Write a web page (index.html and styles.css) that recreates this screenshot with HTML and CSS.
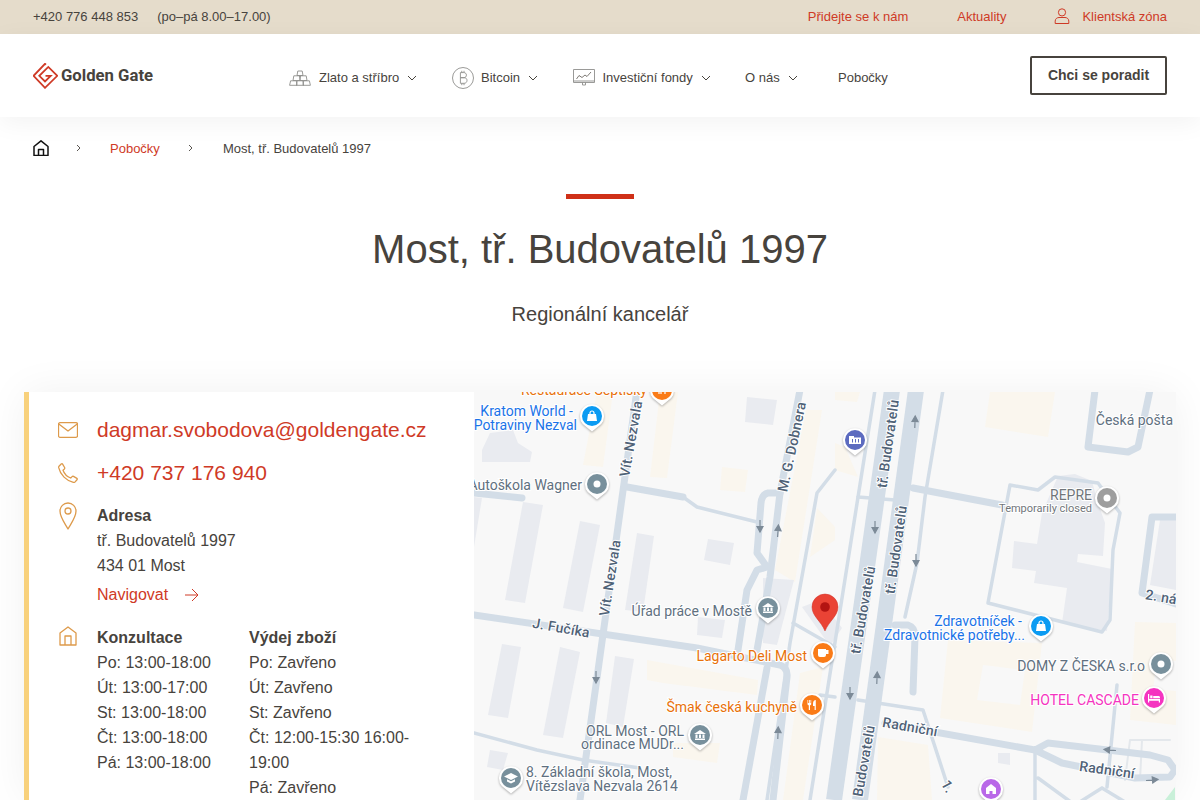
FILE: index.html
```html
<!DOCTYPE html>
<html lang="cs">

<head>
    <meta charset="UTF-8">
    <meta name="viewport" content="width=device-width, initial-scale=1.0">
    <title>Most, tř. Budovatelů 1997 - Golden Gate</title>
    <link rel="stylesheet" href="styles.css">
</head>

<body>
    <div class="topbar">
        <div class="topbar-left">
            <span>+420 776 448 853</span>
            <span>(po–pá 8.00–17.00)</span>
        </div>
        <div class="topbar-right">
            <a href="#">Přidejte se k nám</a>
            <a href="#">Aktuality</a>
            <a href="#" class="client-link">
                <svg class="user-icon" viewBox="0 0 16 16">
                    <circle cx="8" cy="4.4" r="3.6" />
                    <path d="M1.2 15.5h13.6v-2.4c0-2.2-1.8-3.6-3.8-3.6H5c-2 0-3.8 1.4-3.8 3.6z" />
                </svg>
                Klientská zóna
            </a>
        </div>
    </div>

    <header class="header">
        <a href="#" class="logo">
            <svg class="logo-mark" viewBox="0 0 25 26">
                <path d="M13 1.600 12 .8 .6 12.800 12 24.800 24.300 12.800 15.300 3.900 6.300 12.800 12 18.500 17.700 12.800H12.500" />
            </svg>
            <span>Golden Gate</span>
        </a>
        <nav class="nav">
            <a href="#" class="nav-item nav-gold">
                <svg class="nav-icon" viewBox="0 0 22 16">
                    <path d="M8.8 1h4.4l.8 4.5H8zM4.8 5.8h5.6l.7 4.7H4zM11.6 5.8h5.6l.8 4.7h-7.1zM1.6 10.8h5.7l.7 4.5H.6zM8.2 10.8h5.6l.7 4.5H7.5zM14.7 10.8h5.7l1 4.5h-7.4z" />
                </svg>
                Zlato a stříbro
                <svg class="chevron" viewBox="0 0 10 6"><path d="M1 1l4 4 4-4" /></svg>
            </a>
            <a href="#" class="nav-item nav-bitcoin">
                <svg class="nav-icon" viewBox="0 0 22 22">
                    <circle cx="11" cy="11" r="10.5" />
                    <path d="M8.4 5.6h3.4c1.6 0 2.6 1 2.6 2.5s-1 2.6-2.6 2.6H8.4zM8.4 10.7h3.8c1.7 0 2.8 1.1 2.8 2.7s-1.1 2.9-2.8 2.9H8.4zM9.8 5.6V3.8M12 5.6V3.8M9.8 16.3v1.9M12 16.3v1.9" />
                </svg>
                Bitcoin
                <svg class="chevron" viewBox="0 0 10 6"><path d="M1 1l4 4 4-4" /></svg>
            </a>
            <a href="#" class="nav-item nav-funds">
                <svg class="nav-icon" viewBox="0 0 22 17">
                    <path d="M.5.5h21v13H.5zM.5 12h21M9.5 13.5v2.500h3v-2.500" />
                    <path class="chart-line" d="M3.500 10l2.500-3.500 3 2 3-2.500 2 1.500 4-4.500" />
                </svg>
                Investiční fondy
                <svg class="chevron" viewBox="0 0 10 6"><path d="M1 1l4 4 4-4" /></svg>
            </a>
            <a href="#" class="nav-item nav-about">
                O nás
                <svg class="chevron" viewBox="0 0 10 6"><path d="M1 1l4 4 4-4" /></svg>
            </a>
            <a href="#" class="nav-item">Pobočky</a>
        </nav>
        <a href="#" class="cta">Chci se poradit</a>
    </header>

    <div class="breadcrumb">
        <a href="#" class="crumb-home">
            <svg viewBox="0 0 16 16">
                <path d="M1 15.500V6.500L8 .8l7 5.700v9zM5.500 15.500V9.500h5v6" />
            </svg>
        </a>
        <svg class="crumb-sep" viewBox="0 0 5 8"><path d="M1 1l3 3-3 3" /></svg>
        <a href="#" class="crumb-link">Pobočky</a>
        <svg class="crumb-sep" viewBox="0 0 5 8"><path d="M1 1l3 3-3 3" /></svg>
        <span>Most, tř. Budovatelů 1997</span>
    </div>

    <div class="title-block">
        <div class="title-bar"></div>
        <h1>Most, tř. Budovatelů 1997</h1>
        <p>Regionální kancelář</p>
    </div>

    <div class="card">
        <div class="info">
            <div class="info-row big-row">
                <svg class="info-icon" viewBox="0 0 20 16">
                    <rect x=".5" y=".7" width="19" height="14.600" rx="1.500" />
                    <path d="M.8 2l9.200 7 9.200-7" />
                </svg>
                <a href="#">dagmar.svobodova@goldengate.cz</a>
            </div>
            <div class="info-row big-row">
                <svg class="info-icon" viewBox="0 0 20 20">
                    <path d="M1 3.200 3.200 1c.5-.4 1.100-.4 1.400.1l2 3.400c.3.500.2 1-.2 1.400L5 7.200c1.200 3.300 4.300 6.500 7.700 7.800l1.400-1.400c.4-.4.900-.5 1.400-.2l3.400 2c.5.300.5.900.1 1.400l-1.900 2.100c-.4.400-1 .6-1.600.5C8.500 18 2.200 11.700.7 4.700c-.1-.6 0-1.100.3-1.500z" />
                </svg>
                <a href="#">+420 737 176 940</a>
            </div>
            <div class="info-row address-row">
                <svg class="info-icon pin-icon" viewBox="0 0 18 28">
                    <path d="M9 27C5 20 1 15 1 9a8 8 0 0 1 16 0c0 6-4 11-8 18z" />
                    <circle cx="9" cy="9" r="3" />
                </svg>
                <div>
                    <strong>Adresa</strong>
                    <div>tř. Budovatelů 1997</div>
                    <div>434 01 Most</div>
                    <a href="#" class="navigate">
                        Navigovat
                        <svg viewBox="0 0 14 14"><path d="M0 7h13M7 1l6 6-6 6" /></svg>
                    </a>
                </div>
            </div>
            <div class="info-row hours-row">
                <svg class="info-icon home-icon" viewBox="0 0 18 20">
                    <path d="M1 19V7l8-6 8 6v12zM6 19v-9h6v9" />
                </svg>
                <div class="hours">
                    <div>
                        <strong>Konzultace</strong>
                        <div>Po: 13:00-18:00</div>
                        <div>Út: 13:00-17:00</div>
                        <div>St: 13:00-18:00</div>
                        <div>Čt: 13:00-18:00</div>
                        <div>Pá: 13:00-18:00</div>
                    </div>
                    <div>
                        <strong>Výdej zboží</strong>
                        <div>Po: Zavřeno</div>
                        <div>Út: Zavřeno</div>
                        <div>St: Zavřeno</div>
                        <div>Čt: 12:00-15:30 16:00-19:00</div>
                        <div>Pá: Zavřeno</div>
                    </div>
                </div>
            </div>
        </div>

        <div class="map">
            <!-- map drawn in page coordinates, so the viewBox starts at the map's corner -->
            <svg viewBox="474 392 702 408">
                <defs>
                    <path id="arrow" d="M0 -6v9M-3 0.500 0 6 3 0.500z" />
                    <path id="pin-shape" d="M0 15.500-9.200 8A12 12 0 1 1 9.200 8z" />
                </defs>

                <rect class="land" x="474" y="392" width="702" height="408" />

                <g class="tan">
                    <path d="M597 392h16l-10 75-20-2z" />
                    <path d="M660 392h18l-11 86-17-1z" />
                    <path d="M722 467l26 3-3 22-25-2z" />
                    <path d="M806 410h16l-27 172-20-12z" />
                    <path d="M817 508l18 19v13l-25 17z" />
                    <path d="M835 392h25l-3 10-22-2zM835 443l10 4 13 30-23-7z" />
                    <path d="M647 660l111 20-1 15-94-12-16-3z" />
                    <path d="M823 667l-20 133h-20l17-127z" />
                    <path d="M673 743h47l-3 20-44-6z" />
                    <path d="M990 392h65l-7 45-63-10z" />
                    <path d="M948 640l94 3-10 89-92-14z" />
                    <path d="M1135 622l41 1v102l-46-5z" />
                    <path d="M878 737l50 8 4 55h-55z" />
                    <path class="tan-hole" d="M983 665l42 5-5 35-43-5z" />
                    <path class="tan-hole" d="M1157 660l19 1v30l-23-2z" />
                </g>

                <g class="building">
                    <path d="M747 397l30 3-4 25-28-3z" />
                    <path d="M482 450l8-17 23-3 5 13 14 9-2 10h-48z" />
                    <path d="M523 502l20 3-18 98-20-3z" />
                    <path d="M580 521l20 4-17 87-20-4z" />
                    <path d="M637 533l17 3-11 76-18-2z" />
                    <path d="M708 539l26 4-4 22-26-5z" />
                    <path d="M698 617l27 3-3 18-25-3z" />
                    <path d="M502 644l19 3-13 71-20-3z" />
                    <path d="M560 647l20 5-17 86-20-3z" />
                    <path d="M615 656l19 3-11 68-17-4z" />
                    <path d="M474 497l8 1-8 49z" />
                    <path d="M490 750l18 3-5 17-16-3z" />
                    <path d="M763 578l31 2-17 65-14-2z" />
                    <path d="M802 607l18-7 22 28-12 18z" />
                    <path d="M1058 476l17-2 17 7 5 19 8 23-2 33-25-2-1 8 35 7-5 62-45-8 5-35-33-5 2-12-24-3 2-27 23 3 5-31z" />
                    <path d="M1160 520h16v70l-26-5z" />
                    <path d="M998 753h12v12l-12-2z" />
                </g>
                <path class="park" d="M1165 800l10-13v13z" />

                <g class="road-thin">
                    <path d="M875 390 810 800" />
                    <path d="M835 470 817 493 790 643 767 800" />
                    <path d="M793 623 835 647" />
                    <path d="M820 695 835 697" />
                    <path d="M858 497 895 500" />
                    <path d="M858 700 923 710 948 787" />
                    <path d="M1010 485 1038 490 1055 477 1098 483 1120 513 1113 550 1110 620 1102 632 988 603 1010 485z" />
                    <path d="M1117 685 1107 787" />
                    <path d="M1035 752V800M1038 778 1075 805M1102 788 1075 805M1102 788 1130 805" />
                    <path d="M474 733 537 750 583 760 640 768" />
                    <path d="M943 390 925 497 917 563 905 617" />
                    <path d="M683 497 697 507 757 522" />
                    <path class="road-faint" d="M1125 780 1130 740h40M1140 780l2-40" />
                </g>

                <g class="road">
                    <path d="M474 493 522 498" />
                    <path d="M627 487 683 497" />
                    <path d="M637 390 580 800" />
                    <path d="M474 615 697 648 780 665Q788 668 787 677L773 800" />
                    <path d="M767 668 743 800" />
                    <path d="M800 390 780 493 770 577 757 650" />
                    <path d="M780 493H768Q762 494 761 503L757 553 767 567 757 570 747 590 738 650" />
                    <path d="M913 488 1002 505" />
                    <path d="M895 625H908Q915 627 915 637L913 692" />
                    <path d="M885 723 1035 750 1048 743 1150 755 1168 760 1175 770 1170 777 1135 778 1062 763 1035 750" />
                    <path d="M1095 390 1088 447 1128 452 1138 447 1150 390" />
                    <path d="M1176 517H1152L1142 593 1176 604" />
                </g>
                <path class="road-wide" d="M892 390 834 800" />
                <path class="road-wide road-right" d="M916 390 860 800" />

                <g class="flow">
                    <use href="#arrow" transform="translate(760 526)" />
                    <use href="#arrow" transform="translate(778 531) rotate(184)" />
                    <use href="#arrow" transform="translate(596 677)" />
                    <use href="#arrow" transform="translate(778 733) rotate(182)" />
                    <use href="#arrow" transform="translate(915 422) rotate(182)" />
                    <use href="#arrow" transform="translate(875 527)" />
                    <use href="#arrow" transform="translate(916 560)" />
                    <use href="#arrow" transform="translate(877 678) rotate(182)" />
                    <use href="#arrow" transform="translate(850 693)" />
                    <use href="#arrow" transform="translate(1110 750) rotate(95)" />
                    <use href="#arrow" transform="translate(1152 780) rotate(-95)" />
                </g>

                <g class="street">
                    <text transform="translate(632 439) rotate(-80)">Vít. Nezvala</text>
                    <text transform="translate(611 578) rotate(-81)">Vít. Nezvala</text>
                    <text transform="translate(793 447) rotate(-78)">M. G. Dobnera</text>
                    <text transform="translate(561 629) rotate(10)">J. Fučíka</text>
                    <text transform="translate(889 444) rotate(-82)">tř. Budovatelů</text>
                    <text transform="translate(897 550) rotate(-82)">tř. Budovatelů</text>
                    <text transform="translate(864 610) rotate(-80)">tř. Budovatelů</text>
                    <text transform="translate(865 761) rotate(-80)">Budovatelů</text>
                    <text transform="translate(910 728) rotate(10)">Radniční</text>
                    <text transform="translate(1107 771) rotate(8)">Radniční</text>
                    <text transform="translate(1161 598) rotate(10)">2. ná</text>
                    <text transform="translate(947 787) rotate(62)">1.</text>
                </g>

                <g class="poi">
                    <text class="poi-orange" x="647" y="395">Restaurace Šeptisky</text>
                    <text class="poi-blue" x="573" y="416">Kratom World -</text>
                    <text class="poi-blue" x="577" y="430">Potraviny Nezval</text>
                    <text class="poi-grey" x="582" y="490">Autoškola Wagner</text>
                    <text class="poi-grey" x="752" y="616">Úřad práce v Mostě</text>
                    <text class="poi-orange" x="807" y="661">Lagarto Deli Most</text>
                    <text class="poi-orange" x="797" y="712">Šmak česká kuchyně</text>
                    <text class="poi-grey" x="684" y="736">ORL Most - ORL</text>
                    <text class="poi-grey" x="684" y="749">ordinace MUDr...</text>
                    <text class="poi-grey poi-start" x="526" y="777">8. Základní škola, Most,</text>
                    <text class="poi-grey poi-start" x="526" y="791">Vítězslava Nezvala 2614</text>
                    <text class="poi-grey" x="1173" y="425">Česká pošta</text>
                    <text class="poi-muted" x="1092" y="500">REPRE</text>
                    <text class="poi-small" x="1092" y="512">Temporarily closed</text>
                    <text class="poi-blue" x="1022" y="626">Zdravotníček -</text>
                    <text class="poi-blue" x="1025" y="640">Zdravotnické potřeby...</text>
                    <text class="poi-grey" x="1145" y="671">DOMY Z ČESKA s.r.o</text>
                    <text class="poi-pink" x="1139" y="705">HOTEL CASCADE</text>
                </g>

                <g class="pin">
                    <g transform="translate(662 390)">
                        <use href="#pin-shape" /><circle class="fill-orange" r="10" />
                        <path class="glyph" d="M-3-4v8M-1-4v8M3-4v8" />
                    </g>
                    <g transform="translate(592 416)">
                        <use href="#pin-shape" /><circle class="fill-blue" r="10" />
                        <path class="glyph-solid" d="M-5 5-4-2H4L5 5z" /><path class="glyph" d="M-2-2V-3A2 2 0 0 1 2-3V-2" />
                    </g>
                    <g transform="translate(597 484)">
                        <use href="#pin-shape" /><circle class="fill-grey" r="10" /><circle class="glyph-solid" r="3.500" />
                    </g>
                    <g transform="translate(768 608)">
                        <use href="#pin-shape" /><circle class="fill-grey" r="10" />
                        <path class="glyph-solid" d="M-6-1 0-5 6-1zM-5 3.500H5V5H-5zM-4.500-.5h2v3.500h-2zM-1-.5h2v3.500h-2zM2.500-.5h2v3.500h-2z" />
                    </g>
                    <g transform="translate(823 653)">
                        <use href="#pin-shape" /><circle class="fill-orange" r="10" />
                        <path class="glyph-solid" d="M-5-4H3V-3H5.500V1H3V2A2 2 0 0 1 1 4H-3A2 2 0 0 1-5 2z" />
                    </g>
                    <g transform="translate(812 705)">
                        <use href="#pin-shape" /><circle class="fill-orange" r="10" />
                        <path class="glyph-solid" d="M-4.500-5H-3.800V-2H-3V-5H-2.200V-2H-1.500V-5H-.8V-.5L-2 .5V5H-3.200V.5L-4.500-.5zM1-1C1-3.500 2-5 3.800-5V5H2.600V1H1z" />
                    </g>
                    <g transform="translate(700 735)">
                        <use href="#pin-shape" /><circle class="fill-grey" r="10" />
                        <path class="glyph-solid" d="M-6-1 0-5 6-1zM-5 3.500H5V5H-5zM-4.500-.5h2v3.500h-2zM-1-.5h2v3.500h-2zM2.500-.5h2v3.500h-2z" />
                    </g>
                    <g transform="translate(511 778)">
                        <use href="#pin-shape" /><circle class="fill-grey" r="10" />
                        <path class="glyph-solid" d="M0-5 7-1.500 0 2-7-1.500zM-4 1.300 0 3.300 4 1.300V3.500L0 5.500-4 3.500z" />
                    </g>
                    <g transform="translate(855 440)">
                        <use href="#pin-shape" /><circle class="fill-indigo" r="10" />
                        <path class="glyph-solid" d="M-6-4H-1V-2.500H6V4H-6z" />
                        <path class="glyph-indigo" d="M-2.500 2.500V-1M.5 2.500V-1M3.500 2.500V-1" />
                    </g>
                    <g transform="translate(1107 498)">
                        <use href="#pin-shape" /><circle class="fill-muted" r="10" /><circle class="glyph-solid" r="3.500" />
                    </g>
                    <g transform="translate(1041 626)">
                        <use href="#pin-shape" /><circle class="fill-blue" r="10" />
                        <path class="glyph-solid" d="M-5 5-4-2H4L5 5z" /><path class="glyph" d="M-2-2V-3A2 2 0 0 1 2-3V-2" />
                    </g>
                    <g transform="translate(1161 664)">
                        <use href="#pin-shape" /><circle class="fill-grey" r="10" /><circle class="glyph-solid" r="3.500" />
                    </g>
                    <g transform="translate(1154 698)">
                        <use href="#pin-shape" /><circle class="fill-pink" r="10" />
                        <path class="glyph-solid" d="M-6-4H-4.800V1H6V4.500H4.800V2.800H-4.800V4.500H-6zM-3.800-2.500H-1.500V.2H-3.800zM-.8-2H4.500C5.400-2 6-1.400 6-.5V.2H-.8z" />
                    </g>
                    <g transform="translate(991 789)">
                        <use href="#pin-shape" /><circle class="fill-purple" r="10" />
                        <path class="glyph-solid" d="M-5 5-5-1 0-5 5-1V5H1.500V2H-1.500V5z" />
                    </g>
                </g>

                <path class="marker" d="M825 631C821 621 812 616 812 607A13 13 0 0 1 838 607C838 616 829 621 825 631z" />
                <circle class="marker-dot" cx="825" cy="607" r="4.800" />
            </svg>
        </div>
    </div>
</body>

</html>
```

FILE: styles.css
```css
* {
    box-sizing: border-box;
}

html,
body {
    height: 100%;
}

body {
    margin: 0;
    height: 100vh;
    overflow: hidden;
    display: flex;
    flex-direction: column;
    font-family: "Liberation Sans", Arial, sans-serif;
    color: #47433d;
    background-color: #fff;
}

a {
    color: #cf3a26;
    text-decoration: none;
}

/* top strip */
.topbar {
    flex: none;
    height: 34px;
    padding: 0 33px 2px;
    display: flex;
    justify-content: space-between;
    align-items: center;
    font-size: 13px;
    background-color: #e5dccb;
}

.topbar-left {
    display: flex;
    gap: 19px;
}

.topbar-right {
    display: flex;
    align-items: center;
    gap: 48px;
}

.topbar-right a:first-child {
    margin-right: 1px;
}

.client-link {
    display: flex;
    align-items: center;
    gap: 12px;
}

.user-icon {
    width: 16px;
    height: 16px;
    fill: none;
    stroke: #cf3a26;
    stroke-width: 1;
}

/* main header */
.header {
    flex: none;
    position: relative;
    height: 83px;
    padding: 0 33px;
    display: flex;
    align-items: center;
    background-color: #fff;
    box-shadow: 0 6px 24px rgba(0, 0, 0, 0.05);
}

.logo {
    width: 256px;
    display: flex;
    align-items: center;
    gap: 3px;
    color: #47433d;
    font-family: Roboto, sans-serif;
    font-size: 16.700px;
    font-weight: 700;
}

.logo-mark {
    width: 25px;
    height: 26px;
    fill: none;
    stroke: #cf3a26;
    stroke-width: 1.800;
}

.nav {
    display: flex;
    align-items: center;
    font-size: 13px;
    padding-top: 4px;
}

.nav-item {
    display: flex;
    align-items: center;
    color: #47433d;
}

.nav-gold {
    width: 163px;
}

.nav-bitcoin {
    width: 121px;
}

.nav-funds {
    width: 172px;
}

.nav-about {
    width: 93px;
}

.nav-icon {
    width: 22px;
    height: 22px;
    margin-right: 8px;
    fill: none;
    stroke: #8f8f8c;
    stroke-width: 0.900;
}

.nav-bitcoin .nav-icon {
    margin-right: 7px;
}

.nav-funds .nav-icon {
    height: 17px;
    margin-right: 7.500px;
}

.chart-line {
    stroke: #6f6b65;
}

.chevron {
    width: 10px;
    height: 6px;
    margin-left: 8px;
    fill: none;
    stroke: #47433d;
    stroke-width: 1;
}

.cta {
    margin-left: auto;
    width: 137px;
    height: 39px;
    display: flex;
    align-items: center;
    justify-content: center;
    padding-bottom: 2px;
    border: 2px solid #47433d;
    border-radius: 2px;
    color: #47433d;
    font-size: 14px;
    font-weight: 700;
}

/* breadcrumb */
.breadcrumb {
    flex: none;
    height: 63px;
    padding: 0 33px 1px;
    display: flex;
    align-items: center;
    font-size: 13px;
}

.crumb-home {
    display: flex;
    width: 16px;
}

.crumb-home svg {
    width: 16px;
    height: 16px;
    fill: none;
    stroke: #111;
    stroke-width: 1.500;
    stroke-linejoin: round;
}

.crumb-sep {
    width: 5px;
    height: 8px;
    margin: 0 29px 0 27px;
    fill: none;
    stroke: #47433d;
    stroke-width: 0.900;
}

.crumb-link {
    display: block;
    margin-right: 1px;
}

.crumb-link + .crumb-sep {
    margin-right: 30px;
}

/* title */
.title-block {
    flex: none;
    height: 212px;
    padding-top: 14px;
    text-align: center;
}

.title-bar {
    width: 68px;
    height: 5px;
    margin: 0 auto;
    background-color: #cf3018;
}

.title-block h1 {
    margin: 25px 0 0;
    font-size: 40px;
    font-weight: 400;
    line-height: 50px;
}

.title-block p {
    margin: 27px 0 0;
    font-size: 20px;
    line-height: 26px;
}

/* branch card */
.card {
    flex: 1;
    min-height: 0;
    margin: 0 24px;
    display: flex;
    overflow: hidden;
    box-shadow: 0 0 40px rgba(0, 0, 0, 0.06);
}

.info {
    flex: none;
    width: 450px;
    padding: 25px 29px 0;
    border-left: 5px solid #f8d17c;
    font-size: 16px;
    line-height: 25px;
    background-color: #fff;
}

.info-row {
    display: flex;
}

.info-icon {
    flex: none;
    width: 20px;
    height: 20px;
    margin-right: 19px;
    fill: none;
    stroke: #dd9a4b;
    stroke-width: 1.300;
    stroke-linejoin: round;
}

.big-row {
    align-items: center;
    height: 25px;
    margin-bottom: 18px;
    font-size: 21px;
}

.address-row {
    margin-bottom: 18px;
}

.pin-icon {
    height: 28px;
    margin-top: -1px;
}

.home-icon {
    margin-top: 1px;
}

.navigate {
    display: flex;
    align-items: center;
    gap: 17px;
    margin-top: 4px;
}

.navigate svg {
    width: 14px;
    height: 14px;
    fill: none;
    stroke: #cf3a26;
    stroke-width: 1;
}

.hours {
    display: grid;
    grid-template-columns: 152px 170px;
}

/* map */
.map {
    flex: 1;
    min-width: 0;
}

.map svg {
    display: block;
    width: 702px;
    height: 408px;
}

.land {
    fill: #f8f8f8;
}

.tan path {
    fill: #faf6ee;
}

.tan .tan-hole {
    fill: #f8f8f8;
}

.building path {
    fill: #e9ebf0;
}

.park {
    fill: #c9f0d9;
}

.road path,
.road-thin path,
.road-wide {
    fill: none;
    stroke: #d3dde7;
    stroke-linecap: round;
    stroke-linejoin: round;
}

.road path {
    stroke-width: 7;
}

.road-thin path {
    stroke-width: 3.500;
}

.road-thin .road-faint {
    stroke: #e4e8ec;
    stroke-width: 2;
}

.road-wide {
    stroke-width: 16;
    stroke-linecap: butt;
}

.flow use {
    fill: #7c8a97;
    stroke: #7c8a97;
    stroke-width: 1.200;
}

.street text {
    font-family: Roboto, sans-serif;
    font-size: 14px;
    font-weight: 500;
    letter-spacing: 0.2px;
    text-anchor: middle;
    dominant-baseline: middle;
    fill: #4f6277;
    stroke: #fff;
    stroke-width: 2;
    paint-order: stroke;
}

.poi text {
    font-family: Roboto, sans-serif;
    font-size: 14px;
    text-anchor: end;
    stroke: #fff;
    stroke-width: 2;
    paint-order: stroke;
}

.poi .poi-start {
    text-anchor: start;
}

.poi-orange {
    fill: #e8710a;
}

.poi-blue {
    fill: #1a73e8;
}

.poi-grey {
    fill: #5f7080;
}

.poi-muted {
    fill: #70757a;
}

.poi .poi-small {
    font-size: 11px;
    fill: #70757a;
}

.poi-pink {
    fill: #f534c0;
}

.pin use {
    fill: #fff;
    filter: drop-shadow(0 1px 1px rgba(0, 0, 0, 0.3));
}

.fill-orange {
    fill: #fa7b17;
}

.fill-blue {
    fill: #0b9bf2;
}

.fill-grey {
    fill: #78909c;
}

.fill-muted {
    fill: #9e9e9e;
}

.fill-indigo {
    fill: #5c6bc0;
}

.fill-pink {
    fill: #f534c0;
}

.fill-purple {
    fill: #b968e8;
}

.glyph {
    fill: none;
    stroke: #fff;
    stroke-width: 1.200;
}

.glyph-solid {
    fill: #fff;
}

.glyph-indigo {
    fill: none;
    stroke: #5c6bc0;
    stroke-width: 1;
}

.marker {
    fill: #ea4335;
    stroke: #d0342a;
    stroke-width: 0.500;
}

.marker-dot {
    fill: #b31412;
}
```
